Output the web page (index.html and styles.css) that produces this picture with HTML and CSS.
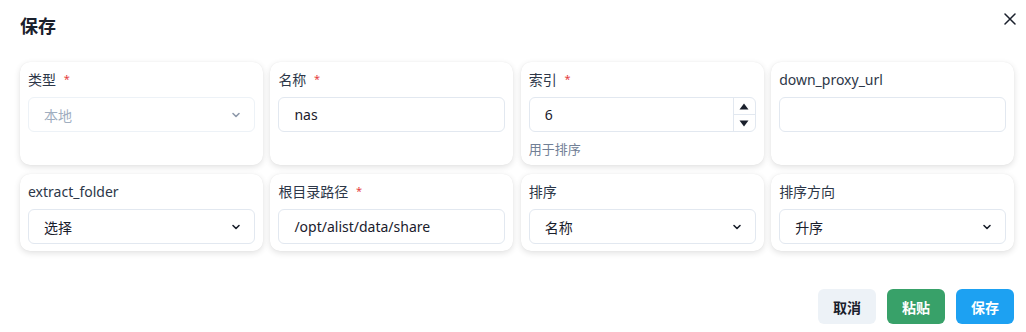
FILE: index.html
```html
<!DOCTYPE html>
<html lang="zh-CN">
<head>
    <meta charset="UTF-8">
    <meta name="viewport" content="width=device-width, initial-scale=1.0">
    <title>保存</title>
    <link rel="stylesheet" href="styles.css">
</head>
<body>
    <div class="dialog">
        <div class="dialog-header">
            <h1>保存</h1>
            <button class="close-btn" aria-label="关闭">
                <svg width="12" height="12" viewBox="0 0 12 12"><path d="M1 1L11 11M11 1L1 11" stroke="#1a202c" stroke-width="1.5" stroke-linecap="round"/></svg>
            </button>
        </div>

        <div class="form-grid">
            <div class="field-card">
                <label class="field-label">类型 <span class="required">*</span></label>
                <div class="select disabled">
                    <span>本地</span>
                    <svg class="chevron" width="12" height="12" viewBox="0 0 12 12"><path d="M3 4.5L6 7.5L9 4.5" fill="none" stroke="currentColor" stroke-width="1.6" stroke-linecap="round" stroke-linejoin="round"/></svg>
                </div>
            </div>

            <div class="field-card">
                <label class="field-label">名称 <span class="required">*</span></label>
                <div class="input">nas</div>
            </div>

            <div class="field-card">
                <label class="field-label">索引 <span class="required">*</span></label>
                <div class="input number-input">
                    <span class="number-value">6</span>
                    <div class="stepper">
                        <span class="step"><svg width="10" height="7" viewBox="0 0 10 7"><path d="M5 0.5L9.5 6.5H0.5Z" fill="#1a202c"/></svg></span>
                        <span class="step"><svg width="10" height="7" viewBox="0 0 10 7"><path d="M0.5 0.5H9.5L5 6.5Z" fill="#1a202c"/></svg></span>
                    </div>
                </div>
                <p class="helper">用于排序</p>
            </div>

            <div class="field-card">
                <label class="field-label">down_proxy_url</label>
                <div class="input"></div>
            </div>

            <div class="field-card">
                <label class="field-label">extract_folder</label>
                <div class="select">
                    <span>选择</span>
                    <svg class="chevron" width="12" height="12" viewBox="0 0 12 12"><path d="M3 4.5L6 7.5L9 4.5" fill="none" stroke="currentColor" stroke-width="1.6" stroke-linecap="round" stroke-linejoin="round"/></svg>
                </div>
            </div>

            <div class="field-card">
                <label class="field-label">根目录路径 <span class="required">*</span></label>
                <div class="input">/opt/alist/data/share</div>
            </div>

            <div class="field-card">
                <label class="field-label">排序</label>
                <div class="select">
                    <span>名称</span>
                    <svg class="chevron" width="12" height="12" viewBox="0 0 12 12"><path d="M3 4.5L6 7.5L9 4.5" fill="none" stroke="currentColor" stroke-width="1.6" stroke-linecap="round" stroke-linejoin="round"/></svg>
                </div>
            </div>

            <div class="field-card">
                <label class="field-label">排序方向</label>
                <div class="select">
                    <span>升序</span>
                    <svg class="chevron" width="12" height="12" viewBox="0 0 12 12"><path d="M3 4.5L6 7.5L9 4.5" fill="none" stroke="currentColor" stroke-width="1.6" stroke-linecap="round" stroke-linejoin="round"/></svg>
                </div>
            </div>
        </div>

        <div class="dialog-footer">
            <button class="btn btn-cancel">取消</button>
            <button class="btn btn-paste">粘贴</button>
            <button class="btn btn-save">保存</button>
        </div>
    </div>
</body>
</html>
```

FILE: styles.css
```css
body {
    margin: 0;
    padding: 0;
    background-color: #ffffff;
    color: #1a202c;
    font-family: "Segoe UI", "Noto Sans", "Noto Sans CJK SC", sans-serif;
}

.dialog {
    padding: 0 12px 0 20px;
}

.dialog-header {
    display: flex;
    justify-content: space-between;
    align-items: flex-start;
    padding-top: 14px;
}

.dialog-header h1 {
    margin: 0;
    font-size: 18px;
    line-height: 24px;
    font-weight: 700;
    color: #1a202c;
}

.close-btn {
    border: none;
    background: none;
    padding: 0;
    margin: -1px -2px 0 0;
    width: 12px;
    height: 12px;
    display: flex;
    cursor: pointer;
}

.form-grid {
    display: grid;
    grid-template-columns: repeat(4, 1fr);
    column-gap: 7.5px;
    row-gap: 9px;
    margin-top: 24px;
}

.field-card {
    background-color: #ffffff;
    border-radius: 10px;
    box-shadow: 0 2px 6px rgba(0, 0, 0, 0.12), 0 0 1px rgba(0, 0, 0, 0.08);
    padding: 8px 8px 7px;
    display: flex;
    flex-direction: column;
}

.field-label {
    font-size: 14px;
    line-height: 20px;
    height: 20px;
    color: #2d3748;
    margin-bottom: 7px;
}

.required {
    color: #e53e3e;
    font-size: 11px;
    line-height: 0;
    margin-left: 4px;
    position: relative;
    top: -2px;
}

.input,
.select {
    height: 35px;
    box-sizing: border-box;
    border: 1px solid #e2e8f0;
    border-radius: 6px;
    padding: 0 15px;
    font-size: 14px;
    color: #1a202c;
    display: flex;
    align-items: center;
}

.select {
    justify-content: space-between;
    padding-right: 12px;
}

.select .chevron {
    color: #1a202c;
}

.select.disabled {
    border-color: #edf2f7;
    color: #a0aec0;
}

.select.disabled .chevron {
    color: #8f9aab;
}

.number-input {
    padding-right: 0;
}

.number-value {
    flex: 1;
}

.stepper {
    width: 21px;
    height: 100%;
    border-left: 1px solid #e2e8f0;
    display: flex;
    flex-direction: column;
}

.step {
    flex: 1;
    display: flex;
    align-items: center;
    justify-content: center;
}

.step + .step {
    border-top: 1px solid #e2e8f0;
}

.helper {
    margin: 8px 0 0;
    font-size: 13px;
    line-height: 18px;
    color: #718096;
}

.dialog-footer {
    display: flex;
    justify-content: flex-end;
    gap: 11px;
    margin-top: 38px;
}

.btn {
    height: 35px;
    padding: 0 15px;
    border: none;
    border-radius: 6px;
    font-family: inherit;
    font-size: 14px;
    font-weight: 700;
    cursor: pointer;
}

.btn-cancel {
    background-color: #edf2f7;
    color: #1a202c;
}

.btn-paste {
    background-color: #38a169;
    color: #ffffff;
}

.btn-save {
    background-color: #1da1f2;
    color: #ffffff;
}
```
